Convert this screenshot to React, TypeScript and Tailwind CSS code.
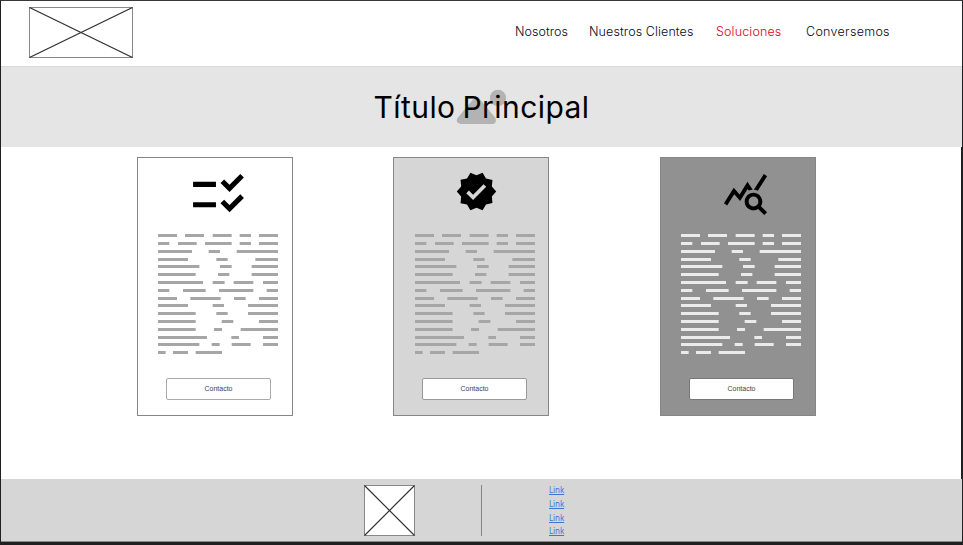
import { MdChecklistRtl, MdVerified, MdQueryStats } from "react-icons/md";
import type { ReactNode } from "react";

// Each row: vertical offset followed by [start, end] pairs, in thirds of a pixel.
const rows: { y: number; runs: [number, number][] }[] = [
  { y: 0, runs: [[0, 57], [81, 138], [164, 221], [245, 279], [303, 360]] },
  { y: 8, runs: [[0, 34], [60, 116], [141, 221], [245, 279], [303, 360]] },
  { y: 16, runs: [[0, 102], [152, 186], [236, 360]] },
  { y: 24, runs: [[0, 90], [175, 209], [292, 360]] },
  { y: 31, runs: [[0, 124], [186, 221], [281, 360]] },
  { y: 39, runs: [[0, 113], [180, 214], [281, 360]] },
  { y: 47, runs: [[0, 135], [164, 200], [227, 286], [315, 360]] },
  { y: 55, runs: [[0, 34], [75, 143], [183, 286], [326, 360]] },
  { y: 63, runs: [[0, 57], [97, 188], [228, 263], [303, 360]] },
  { y: 70, runs: [[0, 90], [164, 198], [270, 360]] },
  { y: 78, runs: [[0, 113], [175, 209], [270, 360]] },
  { y: 86, runs: [[0, 113], [191, 226], [303, 360]] },
  { y: 94, runs: [[0, 113], [168, 192], [248, 360]] },
  { y: 102, runs: [[0, 147], [220, 243], [315, 360]] },
  { y: 109, runs: [[0, 124], [161, 185], [221, 278], [315, 360]] },
  { y: 117, runs: [[0, 23], [45, 90], [113, 192]] },
];

function Redacted({ className }: { className: string }) {
  return (
    <svg viewBox="0 0 120 120" className={"h-[120px] w-[120px] shrink-0 " + className} fill="currentColor">
      {rows.map((row) =>
        row.runs.map(([a, b]) => <rect key={`${row.y}-${a}`} x={a / 3} y={row.y} width={(b - a) / 3} height={3} />),
      )}
    </svg>
  );
}

function Placeholder({ className, w, h }: { className: string; w: number; h: number }) {
  return (
    <svg viewBox={`0 0 ${w} ${h}`} className={className} stroke="#333">
      <rect x=".5" y=".5" width={w - 1} height={h - 1} fill="#fff" stroke="#888" />
      <path d={`M.5 .5L${w - 0.5} ${h - 0.5}M${w - 0.5} .5L.5 ${h - 0.5}`} fill="none" strokeWidth="1.2" />
    </svg>
  );
}

function Card({ className, bars, button, children }: { className: string; bars: string; button: string; children: ReactNode }) {
  return (
    <article className={"flex h-[259px] w-[156px] shrink-0 flex-col items-center border border-[#868686] pl-[7px] " + className}>
      <div className="flex h-[76px] w-full shrink-0 justify-center">{children}</div>
      <Redacted className={bars} />
      <button className={"mt-6 flex h-[22px] w-[105px] shrink-0 items-center justify-center rounded-[2px] border bg-white font-['Liberation_Sans',sans-serif] text-[7px] text-[#3c4257] " + button}>
        Contacto
      </button>
    </article>
  );
}

export default function App() {
  return (
    <div className="flex h-[545px] w-[963px] flex-col overflow-hidden border-t border-r border-b-[3px] border-l border-[#202022] border-t-[#38383a] bg-white font-['Inter',sans-serif]">
      <header className="flex h-[65px] shrink-0 items-start pl-7">
        <Placeholder className="mt-[6px] h-[51px] w-[104px]" w={104} h={51} />
        <nav className="ml-[382px] flex pt-[22px] text-[12.5px] leading-[18px] font-light whitespace-nowrap text-[#07071c]">
          <a className="w-[74px] tracking-[0.05px]">Nosotros</a>
          <a className="w-[127px] tracking-[0.1px]">Nuestros Clientes</a>
          <a className="w-[90px] tracking-[0.15px] text-[#dc0018]">Soluciones</a>
          <a className="tracking-[0.3px]">Conversemos</a>
        </nav>
      </header>
      <section className="relative flex h-[81px] shrink-0 justify-center border-t border-[#d9d9d9] bg-[#e5e5e5]">
        <svg viewBox="0 0 52 36" className="absolute top-[22px] left-[455px] h-9 w-[52px]" fill="#b3b3b3">
          <circle cx="42" cy="9" r="8.2" />
          <path d="M17 10.5Q20.5 6 24 10.5L39.5 29Q41 35 36 35H5Q-1 34 1.5 29Z" />
        </svg>
        <h1 className="relative pt-[17px] text-[30px] leading-[46px] font-normal tracking-[0.45px] [word-spacing:-2px] whitespace-nowrap text-black">Título Principal</h1>
      </section>
      <main className="flex h-[332px] shrink-0 border-r border-[#202022] pt-[10px] pl-[136px]">
        <Card className="bg-white" bars="-ml-px text-[#a6a6a6]" button="border-[#aaa]">
          <MdChecklistRtl className="mt-[6px] -ml-[1px] h-[61px] w-[61px] shrink-0" />
        </Card>
        <Card className="ml-[100px] bg-[#d6d6d6]" bars="text-[#a6a6a6]" button="border-[#999]">
          <MdVerified className="mt-[12px] ml-[3px] h-[43px] w-[43px] shrink-0" />
        </Card>
        <Card className="ml-[111px] bg-[#919191]" bars="-ml-px text-[#ebebeb]" button="border-[#777]">
          <MdQueryStats className="mt-[12px] ml-[7px] h-[47px] w-[47px] shrink-0" />
        </Card>
      </main>
      <footer className="flex h-[63px] shrink-0 border-b border-[#8a8a8a] bg-[#d6d6d6] pl-[363px]">
        <Placeholder className="mt-[6px] h-[51px] w-[51px]" w={51} h={51} />
        <div className="mt-[6px] ml-[66px] h-[51px] w-px bg-[#858585]" />
        <nav className="ml-[67px] flex flex-col pt-[5px] font-['Noto_Sans',sans-serif] text-[8px] tracking-[-0.1px] text-[#3f76d2] underline">
          <a className="h-[14px] leading-[12px]">Link</a>
          <a className="h-[14px] leading-[12px]">Link</a>
          <a className="h-[13px] leading-[12px]">Link</a>
          <a className="h-[12px] leading-[12px]">Link</a>
        </nav>
      </footer>
    </div>
  );
}
